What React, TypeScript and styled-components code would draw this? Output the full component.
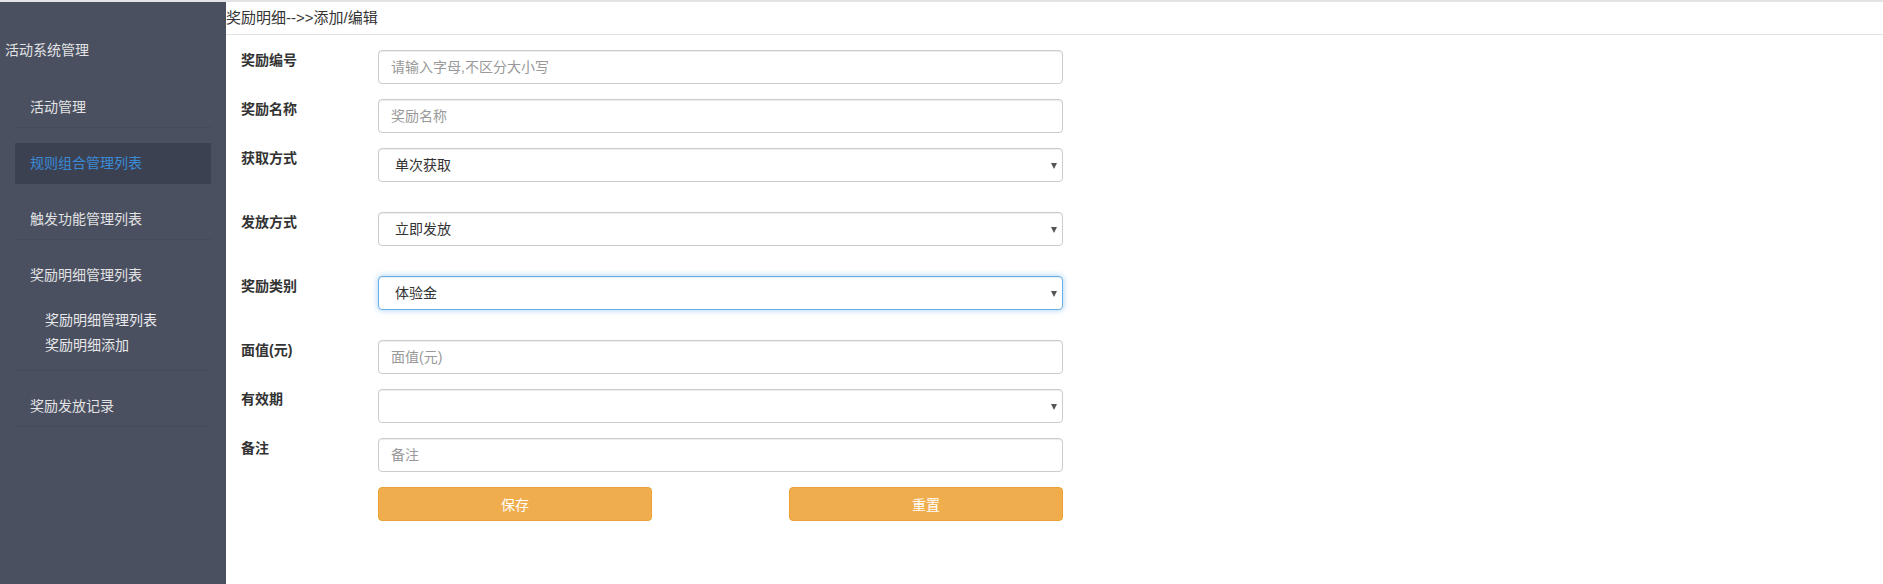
import React from 'react'
import styled, { createGlobalStyle, css } from 'styled-components'

const GlobalStyle = createGlobalStyle`
	html, body {
		margin: 0;
		padding: 0;
		background: #fff;
		font-family: "Liberation Sans", "Noto Sans CJK SC", sans-serif;
		font-size: 14px;
		color: #333;
	}
	* {
		box-sizing: border-box;
	}
`

type Field = {
	label: string
	kind: 'input' | 'select'
	placeholder?: string
	value?: string
	focused?: boolean
	spaced?: boolean
}

const fields: Field[] = [
	{ label: '奖励编号', kind: 'input', placeholder: '请输入字母,不区分大小写' },
	{ label: '奖励名称', kind: 'input', placeholder: '奖励名称' },
	{ label: '获取方式', kind: 'select', value: '单次获取', spaced: true },
	{ label: '发放方式', kind: 'select', value: '立即发放', spaced: true },
	{ label: '奖励类别', kind: 'select', value: '体验金', focused: true, spaced: true },
	{ label: '面值(元)', kind: 'input', placeholder: '面值(元)' },
	{ label: '有效期', kind: 'select', value: '' },
	{ label: '备注', kind: 'input', placeholder: '备注' },
]

export default function App(): JSX.Element {
	return (
		<StyledPage>
			<GlobalStyle/>
			<StyledSidebar>
				<StyledSideTitle>活动系统管理</StyledSideTitle>
				<StyledMenu>
					<StyledMenuItem>活动管理</StyledMenuItem>
					<StyledMenuItem $active>规则组合管理列表</StyledMenuItem>
					<StyledMenuItem>触发功能管理列表</StyledMenuItem>
					<StyledMenuGroup>
						<StyledMenuHead>奖励明细管理列表</StyledMenuHead>
						<StyledSubMenu>
							<StyledSubItem>奖励明细管理列表</StyledSubItem>
							<StyledSubItem>奖励明细添加</StyledSubItem>
						</StyledSubMenu>
					</StyledMenuGroup>
					<StyledMenuItem>奖励发放记录</StyledMenuItem>
				</StyledMenu>
			</StyledSidebar>
			<StyledMain>
				<StyledCrumb>奖励明细--&gt;&gt;添加/编辑</StyledCrumb>
				<StyledForm>
					{fields.map((f) => (
						<StyledRow key={f.label} $spaced={f.spaced}>
							<StyledLabel>{f.label}</StyledLabel>
							{f.kind === 'input' ? (
								<StyledInput placeholder={f.placeholder}/>
							) : (
								<StyledSelectWrap>
									<StyledSelect $focused={f.focused} defaultValue={f.value}>
										<option value={f.value}>{f.value}</option>
									</StyledSelect>
								</StyledSelectWrap>
							)}
						</StyledRow>
					))}
					<StyledActions>
						<StyledButton type="button">保存</StyledButton>
						<StyledButton type="button">重置</StyledButton>
					</StyledActions>
				</StyledForm>
			</StyledMain>
		</StyledPage>
	)
}

const StyledPage = styled.div`
	display: flex;
	height: 584px;
	border-top: 2px solid #e3e3e6;
	overflow: hidden;
`

const StyledSidebar = styled.aside`
	width: 226px;
	flex-shrink: 0;
	background: #4a5060;
	color: #e2e2e4;
`

const StyledSideTitle = styled.div`
	margin-top: 38px;
	padding-left: 5px;
	line-height: 20px;
	font-size: 14px;
`

const StyledMenu = styled.ul`
	list-style: none;
	margin: 27px 15px 0;
	padding: 0;
`

const itemBase = css`
	margin-top: 15px;
	border-bottom: 1px solid #444a59;
	&:first-child {
		margin-top: 0;
	}
`

const StyledMenuItem = styled.li<{ $active?: boolean }>`
	${itemBase}
	height: 41px;
	padding-left: 15px;
	line-height: 40px;
	font-size: 14px;
	${(p) => p.$active && css`
		background: #3c4152;
		color: #3a8ad6;
		border-bottom-color: #3c4152;
	`}
`

const StyledMenuGroup = styled.li`
	${itemBase}
`

const StyledMenuHead = styled.div`
	height: 40px;
	padding-left: 15px;
	line-height: 40px;
	font-size: 14px;
`

const StyledSubMenu = styled.ul`
	list-style: none;
	margin: 0;
	padding: 13px 0 12px 30px;
`

const StyledSubItem = styled.li`
	line-height: 25px;
	font-size: 14px;
	color: #e8e8ea;
`

const StyledMain = styled.main`
	flex: 1;
	min-width: 0;
`

const StyledCrumb = styled.div`
	height: 33px;
	line-height: 32px;
	font-size: 15px;
	color: #333;
	border-bottom: 1px solid #e2e2e2;
`

const StyledForm = styled.form`
	padding: 15px 0 0 15px;
`

const StyledRow = styled.div<{ $spaced?: boolean }>`
	display: grid;
	grid-template-columns: 137px 685px;
	margin-bottom: ${(p) => (p.$spaced ? '30px' : '15px')};
`

const StyledLabel = styled.label`
	line-height: 20px;
	font-size: 14px;
	font-weight: 700;
	color: #333;
`

const controlBase = css`
	width: 100%;
	height: 34px;
	border: 1px solid #ccc;
	border-radius: 4px;
	box-shadow: inset 0 1px 1px rgba(0, 0, 0, 0.075);
	font-family: "Liberation Sans", "Noto Sans CJK SC", sans-serif;
	font-size: 14px;
	color: #555;
	background: #fff;
	outline: none;
`

const StyledInput = styled.input`
	${controlBase}
	padding: 6px 12px;
	&::placeholder {
		color: #999;
	}
`

const StyledSelectWrap = styled.div`
	position: relative;
	&::after {
		content: '';
		position: absolute;
		right: 6px;
		top: 15px;
		border-left: 3.5px solid transparent;
		border-right: 3.5px solid transparent;
		border-top: 6px solid #555;
		pointer-events: none;
	}
`

const StyledSelect = styled.select<{ $focused?: boolean }>`
	${controlBase}
	appearance: none;
	padding: 0 20px 0 16px;
	color: #333;
	${(p) => p.$focused && css`
		border-color: #66afe9;
		box-shadow: inset 0 1px 1px rgba(0, 0, 0, 0.075), 0 0 6px rgba(102, 175, 233, 0.6);
	`}
`

const StyledActions = styled.div`
	display: flex;
	justify-content: space-between;
	width: 822px;
	padding-left: 137px;
`

const StyledButton = styled.button`
	width: 274px;
	height: 34px;
	border: 1px solid #eea236;
	border-radius: 4px;
	background: #f0ad4e;
	color: #fff;
	font-family: "Liberation Sans", "Noto Sans CJK SC", sans-serif;
	font-size: 14px;
	cursor: pointer;
`
